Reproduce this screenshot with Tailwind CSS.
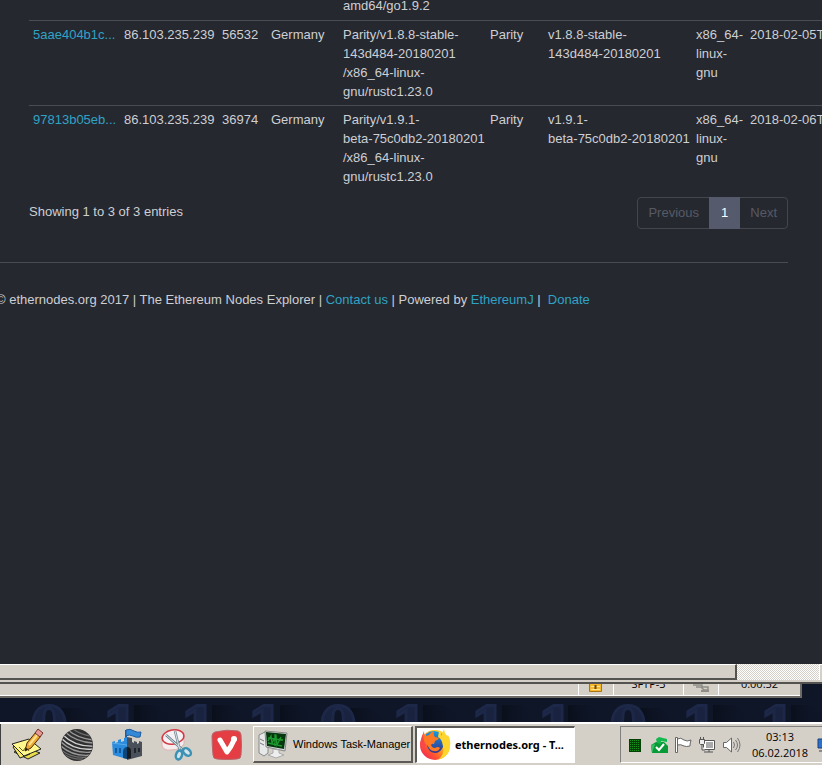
<!DOCTYPE html>
<html lang="en">
<head>
<meta charset="utf-8">
<title>ethernodes.org - The Ethereum Nodes Explorer</title>
<script src="https://cdn.jsdelivr.net/npm/@tailwindcss/browser@4"></script>
</head>
<body class="flex min-h-screen flex-col overflow-hidden bg-[#262830] font-['Liberation_Sans',Arial,sans-serif] text-[13px] leading-[19px] text-[#cdcfd3]">

<main class="flex-1 overflow-hidden">
  <div class="-mt-1 ml-[29px] overflow-hidden">
    <table class="w-[897px] table-fixed border-collapse text-left">
      <colgroup>
        <col class="w-[91px]"><col class="w-[98px]"><col class="w-[49px]"><col class="w-[72px]"><col class="w-[147px]"><col class="w-[58px]"><col class="w-[148px]"><col class="w-[54px]"><col class="w-[180px]">
      </colgroup>
      <tbody class="align-top">
        <tr>
          <td></td><td></td><td></td><td></td>
          <td class="px-1 pb-[5px]">amd64/go1.9.2</td>
          <td></td><td></td><td></td><td></td>
        </tr>
        <tr class="border-t border-[#4a4c53]">
          <td class="whitespace-nowrap p-1"><a href="#" class="text-[#2fa3c4]">5aae404b1c...</a></td>
          <td class="whitespace-nowrap p-1">86.103.235.239</td>
          <td class="p-1">56532</td>
          <td class="p-1">Germany</td>
          <td class="whitespace-nowrap p-1">Parity/v1.8.8-stable-<br>143d484-20180201<br>/x86_64-linux-<br>gnu/rustc1.23.0</td>
          <td class="p-1">Parity</td>
          <td class="whitespace-nowrap p-1">v1.8.8-stable-<br>143d484-20180201</td>
          <td class="whitespace-nowrap p-1">x86_64-<br>linux-<br>gnu</td>
          <td class="whitespace-nowrap p-1">2018-02-05T</td>
        </tr>
        <tr class="border-t border-[#4a4c53]">
          <td class="whitespace-nowrap p-1"><a href="#" class="text-[#2fa3c4]">97813b05eb...</a></td>
          <td class="whitespace-nowrap p-1">86.103.235.239</td>
          <td class="p-1">36974</td>
          <td class="p-1">Germany</td>
          <td class="whitespace-nowrap p-1">Parity/v1.9.1-<br>beta-75c0db2-20180201<br>/x86_64-linux-<br>gnu/rustc1.23.0</td>
          <td class="p-1">Parity</td>
          <td class="whitespace-nowrap p-1">v1.9.1-<br>beta-75c0db2-20180201</td>
          <td class="whitespace-nowrap p-1">x86_64-<br>linux-<br>gnu</td>
          <td class="whitespace-nowrap p-1">2018-02-06T</td>
        </tr>
      </tbody>
    </table>
  </div>

  <div class="mr-[34px] ml-[29px] flex items-start justify-between pt-[7px]">
    <p class="pt-[5px]">Showing 1 to 3 of 3 entries</p>
    <nav aria-label="Pagination" class="flex h-8 rounded border border-[#43464e]">
      <button type="button" disabled class="px-[10px] pb-[2px] text-[#565a64]">Previous</button>
      <button type="button" aria-current="page" class="-my-px bg-[#555a6c] px-3 pb-[2px] text-white">1</button>
      <button type="button" disabled class="px-[10px] pb-[2px] text-[#565a64]">Next</button>
    </nav>
  </div>

  <hr class="mt-[33px] mr-[34px] border-[#4a4c53]">
  <footer class="-ml-1 pt-[27px] whitespace-pre">© ethernodes.org 2017 | The Ethereum Nodes Explorer | <a href="#" class="text-[#2fa3c4]">Contact us</a> | Powered by <a href="#" class="text-[#2fa3c4]">EthereumJ</a> |  <a href="#" class="text-[#2fa3c4]">Donate</a></footer>
</main>

<!-- horizontal scrollbar -->
<div class="flex h-4 shrink-0 bg-[repeating-conic-gradient(#ffffff_0_25%,#d4d0c8_0_50%)] bg-[length:2px_2px]">
  <div class="flex-1 border-t border-r-2 border-b-2 border-t-white border-r-[#55534f] border-b-[#55534f] bg-[#d4d0c8]"></div>
  <div class="w-[82px]"></div>
  <div class="w-[3px] border-t border-l border-white bg-[#d4d0c8]"></div>
</div>
<div class="h-1 shrink-0 border-b-2 border-[#55534f] bg-[#d4d0c8]"></div>

<!-- status bar of the window behind, then the wallpaper -->
<div class="relative h-[38px] shrink-0 overflow-hidden bg-[#0f1628]">
  <svg class="absolute inset-0 h-full w-full" aria-hidden="true">
    <defs><linearGradient id="sh" x1="0" y1="0" x2="1" y2="0"><stop offset="0" stop-color="#0a0f1b"/><stop offset="1" stop-color="#0f1628" stop-opacity="0"/></linearGradient></defs>
    <g fill="url(#sh)"><path d="M60 24h20l24 16H60z"/><path d="M134 21h22l22 19h-44z"/><path d="M212 21h22l16 19h-38z"/><path d="M280 21h22l16 19h-38z"/><path d="M350 24h20l22 16h-42z"/><path d="M423 21h22l22 19h-44z"/><path d="M502 21h22l16 19h-38z"/><path d="M568 21h22l16 19h-38z"/><path d="M640 24h20l22 16h-42z"/><path d="M713 21h22l22 19h-44z"/><path d="M791 21h31v19h-31z"/></g>
    <g font-family="DejaVu Serif, serif" font-weight="bold" font-size="54" text-anchor="middle" fill="#19233f" stroke="#1d2848" stroke-width="3">
      <text x="49" y="62">0</text><text x="121" y="62">1</text><text x="199" y="62">1</text><text x="266" y="62">1</text><text x="338" y="62">0</text><text x="410" y="62">1</text><text x="489" y="62">1</text><text x="556" y="62">1</text><text x="628" y="62">0</text><text x="700" y="62">1</text><text x="778" y="62">1</text>
    </g>
  </svg>
  <div class="relative mr-[20px] flex h-[14px] overflow-hidden border-r-2 border-b-2 border-[#6d6a65] bg-[#d4d0c8] font-['Open_Sans',sans-serif] text-[11px] text-black">
    <div class="flex-1 border-r border-b border-white"></div>
    <div class="flex w-[35px] justify-center border-r border-b border-white">
      <svg width="14" height="8" viewBox="0 0 14 8" aria-hidden="true"><path d="M.5 0v7.500h12V0" fill="#f5b82e" stroke="#a87416"/><path d="M2 2.500h9M2 5.500h9" stroke="#ffe48a"/><path d="M6.500 1v4" stroke="#704600" stroke-width="2"/></svg>
    </div>
    <div class="flex w-[70px] justify-center border-r border-b border-white"><span class="-mt-[10px]">SFTP-3</span></div>
    <div class="flex w-[35px] justify-center border-r border-b border-white">
      <svg width="18" height="8" viewBox="0 0 18 8" aria-hidden="true"><path d="M1 1h9v2H4M9 3h7v3h-4z" fill="none" stroke="#908d87" stroke-width="1.500"/><path d="M9 7h8" stroke="#908d87" stroke-width="2"/></svg>
    </div>
    <div class="flex w-[81px] justify-center border-b border-white"><span class="-mt-[10px]">0:00:52</span></div>
  </div>
</div>

<!-- taskbar -->
<div class="flex h-[43px] shrink-0 items-center border-t-2 border-white bg-[#d4d0c8] font-['Open_Sans',sans-serif] text-[11px] leading-4 text-black">
  <div class="h-full w-px bg-[#404040]"></div>
  <div class="flex w-[252px] shrink-0 pt-px pl-px">
    <button type="button" aria-label="Notes" class="flex w-[50px] justify-center">
      <svg width="34" height="34" viewBox="0 0 34 34" aria-hidden="true"><path d="M4 24l13-4 13 5-12 6z" fill="#e8dc4c" stroke="#222"/><path d="M3 19l7 11 10-4-8-13z" fill="#f5ea62" stroke="#222"/><path d="M2 16l17-5 12 10-17 7z" fill="#fff88c" stroke="#222"/><path d="M9 19l4 4 3-4 3 4" fill="none" stroke="#655f20"/><path d="M15 23l2-8L26 4l5 4-10 12z" fill="#eda934" stroke="#4c2c0a"/><path d="M19 17L28 6" stroke="#ffe28b" stroke-width="2"/><path d="M25 5l3-4 5 4-3 4z" fill="#e99a94" stroke="#6b302d"/><path d="M15 23l1-3 2 1z" fill="#111"/></svg>
    </button>
    <button type="button" aria-label="Sphere" class="flex w-[50px] justify-center">
      <svg width="34" height="34" viewBox="0 0 34 34" aria-hidden="true"><defs><clipPath id="ball"><circle cx="17" cy="17" r="15.500"/></clipPath></defs><circle cx="17" cy="17" r="16" fill="#303030"/><g clip-path="url(#ball)" fill="none" stroke-width="1.300"><path d="M8 2q9 8 25 10M5 4q11 10 28 11" stroke="#999"/><path d="M3 7q12 12 31 11M1 10q13 13 32 11" stroke="#d0d0d0"/><path d="M1 14q13 12 31 10M1 18q12 11 30 9" stroke="#999"/><path d="M1 22q12 9 27 7M3 26q11 6 20 5M13 1q8 6 18 7" stroke="#6c6c6c"/></g></svg>
    </button>
    <button type="button" aria-label="Castle" class="flex w-[50px] justify-center">
      <svg width="34" height="34" viewBox="0 0 34 34" aria-hidden="true"><path d="M16 10V2" stroke="#1e5c9d" stroke-width="2"/><path d="M16 2q4-2 8 1 4 2 7 1l-1 5q-4 1-7-1-4-2-7 0z" fill="#3289d8" stroke="#1e5c9d"/><path d="M2 14l3-1v2l3-1v-2l3-1v3l3-1v-3l3-1v22L3 27z" fill="#2b8bdd"/><path d="M17 9l5 1v4l2 1v-2l3 1v2l2-1v-2l3 1v14l-15 4z" fill="#4a5059"/><path d="M2 15l15 2" fill="none" stroke="#7cc2ef" stroke-opacity=".6"/><path d="M13 30v-7q1-4 4-4v12z" fill="#0f4677"/><path d="M17 31V19q4 0 4 4v7z" fill="#171c22"/><path d="M6 20v5M10 20v5" stroke="#135b9d" stroke-width="2"/><path d="M25 20v5M29 20v4" stroke="#20252c" stroke-width="2"/></svg>
    </button>
    <button type="button" aria-label="Snipping tool" class="flex w-[50px] justify-center">
      <svg width="34" height="34" viewBox="0 0 34 34" aria-hidden="true"><path d="M2 12v6q2 5 9 4 9 0 13-6V8z" fill="#f5eded" stroke="#e0b0b2"/><ellipse cx="13" cy="9" rx="11" ry="7" transform="rotate(-10 13 9)" fill="#f4f2f4" stroke="#d23a45" stroke-width="1.500"/><path d="M6 7l18 16M15 3l5 20" stroke="#6f858f" stroke-width="2.500"/><path d="M6 7l18 16M15 3l5 20" stroke="#d9e4ec"/><ellipse cx="19" cy="27" rx="3" ry="4.500" transform="rotate(18 19 27)" fill="#d4e4ea" stroke="#3c92b5" stroke-width="2.500"/><ellipse cx="27" cy="24" rx="3" ry="4.500" transform="rotate(-48 27 24)" fill="#d4e4ea" stroke="#3c92b5" stroke-width="2.500"/></svg>
    </button>
    <button type="button" aria-label="Vivaldi" class="flex w-[50px] justify-center">
      <svg width="34" height="34" viewBox="0 0 34 34" aria-hidden="true"><path d="M5 4q12-3 23-1 3 1 3 4 1 10 0 20 0 4-4 4-11 1-20 0-4 0-4-4-1-10-1-19 0-3 3-4z" fill="#e43d43" stroke="#b9656a"/><path d="M10 12l7 12q4-5 7-12" fill="none" stroke="#fff" stroke-width="5" stroke-linecap="round" stroke-linejoin="round"/><circle cx="24" cy="11" r="3" fill="#fff"/></svg>
    </button>
  </div>
  <button type="button" class="flex h-[37px] w-40 shrink-0 items-center border-t border-r-2 border-b-2 border-l border-t-white border-r-[#5c5a56] border-b-[#5c5a56] border-l-white pl-1 font-['Liberation_Sans',Arial,sans-serif] whitespace-nowrap">
    <svg class="mr-[5px] shrink-0" width="30" height="30" viewBox="0 0 30 30" aria-hidden="true"><path d="M1 6l6-3 3 2v19l-4 3-5-3z" fill="#e7e9e8" stroke="#868a8b"/><path d="M2 10l4 2M2 14l4 2" stroke="#777"/><path d="M7 2l22 2-2 18L8 18z" fill="#d8dad8" stroke="#888"/><path d="M8 3l20 2-2 15L9 17z" fill="#06370f"/><path d="M10 12l3-5 1 7 4-7 1 9 4-8M10 9l15 2M10 14l14 3M17 5v12" fill="none" stroke="#1d9a2e" stroke-width="1.300"/><path d="M15 20l6 1v3l5 2-8 3-8-3 5-2z" fill="#eee" stroke="#aaa"/></svg>
    Windows Task-Manager
  </button>
  <button type="button" aria-pressed="true" class="ml-[2px] flex h-[37px] w-40 shrink-0 items-center border-t-2 border-r border-b border-l-2 border-t-[#5c5a56] border-r-white border-b-white border-l-[#5c5a56] bg-white pl-[2px] font-['Noto_Sans',sans-serif] font-bold whitespace-nowrap">
    <svg class="mr-1 shrink-0" width="32" height="32" viewBox="0 0 32 32" aria-hidden="true"><defs><linearGradient id="fx" x1="1" y1="0" x2="0" y2="1"><stop offset="0" stop-color="#fff14a"/><stop offset=".4" stop-color="#ffb018"/><stop offset=".7" stop-color="#ff4f32"/><stop offset="1" stop-color="#e6186f"/></linearGradient><linearGradient id="gl" x1="0" y1="0" x2="0" y2="1"><stop offset="0" stop-color="#159be0"/><stop offset="1" stop-color="#35328d"/></linearGradient></defs><circle cx="16" cy="16" r="15" fill="url(#fx)"/><path d="M7 5Q15-1 23 5l1 13q-3 6-8 6-7-1-8-8z" fill="url(#gl)"/><path d="M2 14Q3 7 5 2q0 4 2 5l3-1q2-3 5-4-1 4 1 6l4 1q-1 2-4 3l-1 3q-2-1-3 1 1 3 4 3 3-2 5 0-2 4-6 3-4 0-6-5l-3-3z" fill="#ff7a22"/><path d="M20 2q3 2 3 5Q23 3 25 0q0 4 3 7l1-1q3 5 2 12-1 10-12 13 7-6 5-14-1-7-5-9z" fill="#ffd52e"/><path d="M1 15Q2 8 5 2q-2 7 2 14l-3 5z" fill="#f8484a"/></svg>
    ethernodes.org - T...
  </button>
  <div class="ml-auto flex h-[37px] w-[202px] shrink-0 items-center overflow-hidden border-t border-b border-l border-t-[#808080] border-b-white border-l-[#808080] pl-[2px]">
    <div class="flex w-[120px] shrink-0">
      <svg class="w-6" width="24" height="18" viewBox="0 0 24 18" aria-hidden="true"><path d="M6 3h12v13H6z" fill="#063e08"/><path d="M7.500 4v11M9.500 4v11M11.500 4v11M13.500 4v11M15.500 4v11" stroke="#15931b" stroke-dasharray="1 1"/></svg>
      <svg class="w-6" width="24" height="18" viewBox="0 0 24 18" aria-hidden="true"><path d="M4 9l5-3h8l4 4v7H5z" fill="#089a38"/><path d="M10 7l-1-4 3-2 8 2v3l-6-1v3" fill="#12b84e"/><path d="M4 9l4-1-3 9z" fill="#36bd66"/><path d="M9 11l3 3 5-6" fill="none" stroke="#fff" stroke-width="2"/></svg>
      <svg class="w-6" width="24" height="18" viewBox="0 0 24 18" aria-hidden="true"><path d="M6 3q4-2 7 1 3 2 7 0-1 3-1 6-4 1-6 0-3-2-7-1" fill="#fff" stroke="#666"/><path d="M4.500 1.500h2v15h-2z" fill="#fff" stroke="#666"/></svg>
      <svg class="w-6" width="24" height="18" viewBox="0 0 24 18" aria-hidden="true"><path d="M8.500 4.500h11v9h-11zM9 16h9M14 14v2" fill="#fff" stroke="#555"/><path d="M11 6h7v6h-7z" fill="#a9aaa9"/><path d="M4.500 3.500h5v4l-1 1h-3l-1-1zM5.500 1v2M8.500 1v2M7 9v5h3" fill="#eee" stroke="#555"/></svg>
      <svg class="w-6" width="24" height="18" viewBox="0 0 24 18" aria-hidden="true"><path d="M4.500 6.500h3l5-4.500v14l-5-4.500h-3z" fill="#fff" stroke="#666"/><path d="M14.500 6q2 3 0 6M16.500 4q4 5 0 10M18.500 2q5 7 0 14" fill="none" stroke="#777"/></svg>
    </div>
    <time class="w-[74px] shrink-0 text-center">03:13<br>06.02.2018</time>
    <svg class="shrink-0" width="6" height="14" viewBox="0 0 6 14" aria-hidden="true"><path d="M1 1h5v9H1z" fill="#2b6fd0" stroke="#184079"/><path d="M2 13h4" stroke="#444"/></svg>
  </div>
</div>
</body>
</html>
